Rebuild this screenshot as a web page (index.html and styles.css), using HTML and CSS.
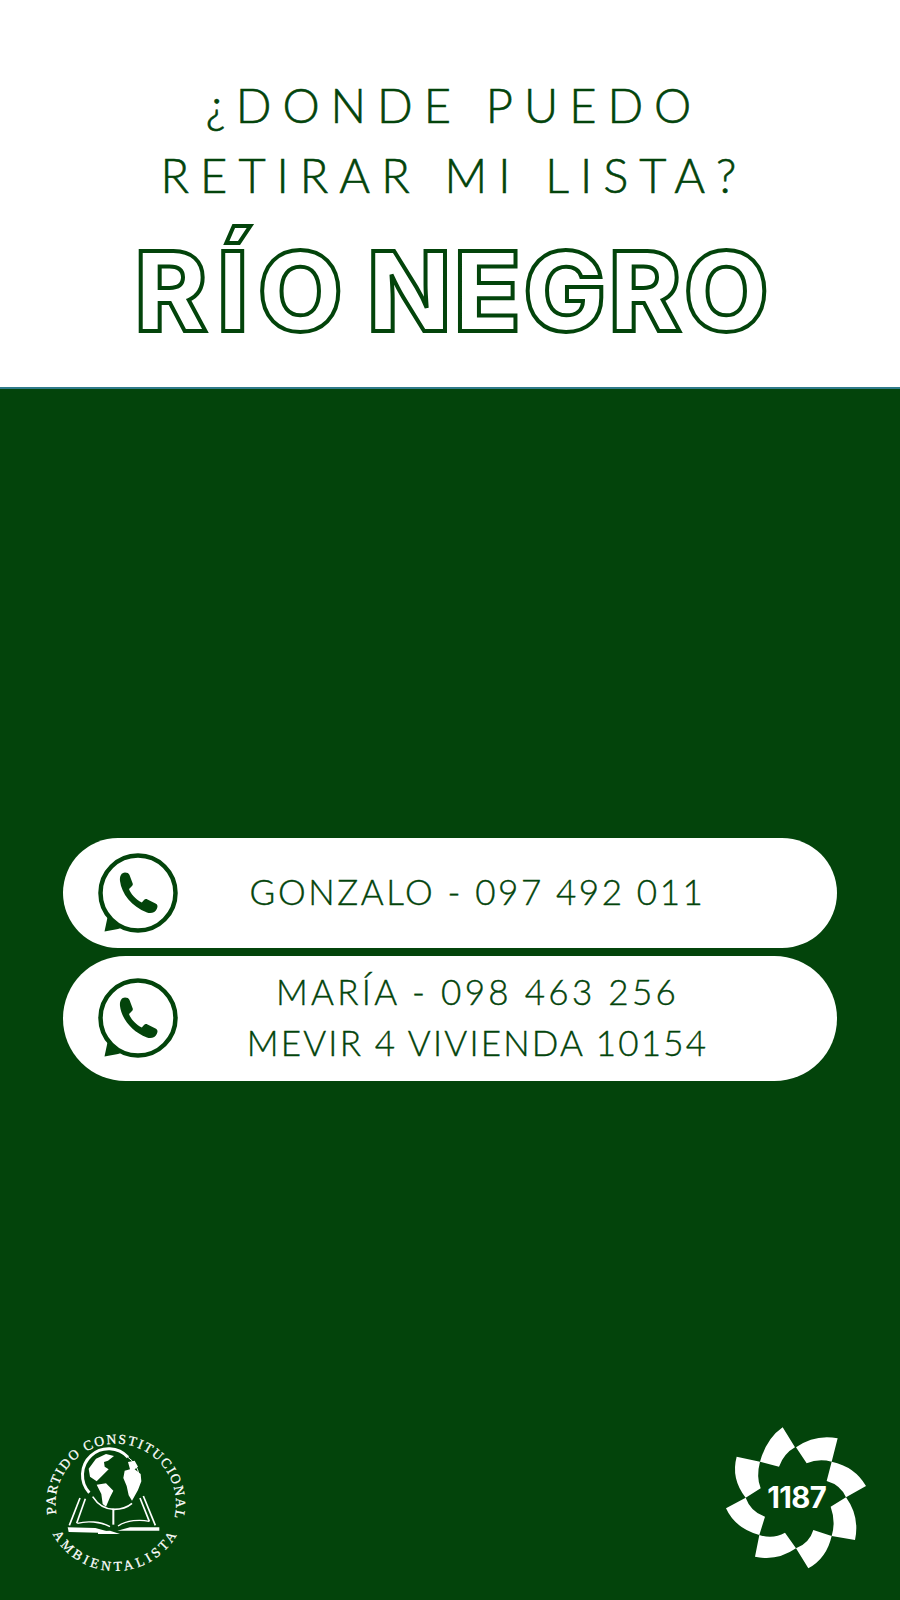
FILE: index.html
```html
<!DOCTYPE html>
<html lang="es">
<head>
<meta charset="utf-8">
<title>Río Negro</title>
<link rel="stylesheet" href="styles.css">
</head>
<body>
<svg class="defs" width="0" height="0" aria-hidden="true">
  <symbol id="wa" viewBox="-44 -44 88 88">
    <path class="wa-tail" d="M-33.5 38.5L-30 22L-14 34L-20 36Z"/>
    <circle class="wa-ring" r="37.5"/>
    <path class="wa-phone" d="M-13-20.5C-16.5-20.5-18.5-17-18-12C-16.5 0.5-6.5 13.5 9 19.5C13 21 17.5 19.5 19 15.5C20 13 19.5 11.5 17.5 10.5L9.5 6.5C8 5.7 7 6 6 7L3.8 9.5C-2.5 6.5-7.5 0.5-9 -4L-6-7C-5-8-5-9-5.5-10L-8.5-18C-9-19.7-11-20.5-13-20.5Z"/>
  </symbol>
</svg>
<header class="head">
  <p class="ask">¿DONDE PUEDO</p>
  <p class="ask">RETIRAR MI LISTA?</p>
  <h1 class="title"><span class="title-first">RÍO</span> NEGRO</h1>
</header>
<main class="panel">
  <section class="contacts">
    <div class="pill pill-one">
      <svg class="wa-icon"><use href="#wa"/></svg>
      <div class="pill-text"><p class="mid">GONZALO - 097 492 011</p></div>
    </div>
    <div class="pill pill-two">
      <svg class="wa-icon"><use href="#wa"/></svg>
      <div class="pill-text"><p class="wide">MARÍA - 098 463 256</p><p>MEVIR 4 VIVIENDA 10154</p></div>
    </div>
  </section>
  <footer class="logos">
    <svg class="logo" viewBox="0 0 510 510">
      <defs>
        <path id="arc-top" d="M79 312A181 181 0 1 1 436 312"/>
        <path id="arc-bot" d="M68 372A213 213 0 0 0 442 372"/>
      </defs>
      <text class="ring-text"><textPath href="#arc-top" textLength="640" lengthAdjust="spacing">PARTIDO CONSTITUCIONAL</textPath></text>
      <text class="ring-text"><textPath href="#arc-bot" textLength="452" lengthAdjust="spacing">AMBIENTALISTA</textPath></text>
      <g transform="translate(2 6)">
        <path class="ring-bold" d="M176 242A78 78 0 0 1 292 136"/>
        <path class="ring-thin" d="M292 136A78 78 0 0 1 308 250"/>
        <path class="ink" d="M196 140L226 126L250 132L232 146L220 150L222 164L234 172L216 190L198 208L178 194L174 170Z"/>
        <path class="ink" d="M198 218L226 214L248 236L238 256L226 284L216 276L212 246Z"/>
        <path class="ink" d="M292 150L312 146L322 164L312 172L330 186L332 208L322 234L304 266L294 250L288 222L278 198L282 176L298 172Z"/>
        <path class="line" d="M186 254C204 282 226 292 250 292C270 292 288 288 304 274"/>
      </g>
      <path class="line thick" d="M250 296V344"/>
      <path class="line" d="M150 264L118 346"/>
      <path class="line" d="M166 266L140 340"/>
      <path class="line thin" d="M142 340C170 332 212 334 240 350"/>
      <path class="line" d="M340 258L376 346"/>
      <path class="line" d="M330 264L358 334"/>
      <path class="line thin" d="M358 334C330 328 290 330 264 348"/>
      <path class="ink" d="M113 352L196 354L240 366L204 368L116 366Z"/>
      <path class="ink" d="M388 352L300 352L262 362L388 362Z"/>
      <path class="ink" d="M204 364L240 362L270 372L204 372Z"/>
    </svg>
    <svg class="logo" viewBox="0 0 510 510">
      <path class="ink" d="M218 52L255 112Q222 130 207 170L150 155Q170 85 218 52Z"/>
      <path class="ink" d="M383 85L365 155Q325 145 290 160L258 112Q315 72 383 85Z"/>
      <path class="ink" d="M468 228L408 262Q392 225 350 213L365 155Q435 170 468 228Z"/>
      <path class="ink" d="M435 390L365 378Q378 335 362 290L408 262Q450 320 435 390Z"/>
      <path class="ink" d="M295 475L258 415Q298 400 310 360L365 378Q350 445 295 475Z"/>
      <path class="ink" d="M135 440L148 375Q190 388 225 368L258 415Q200 455 135 440Z"/>
      <path class="ink" d="M48 295L107 263Q122 305 165 320L148 375Q75 355 48 295Z"/>
      <path class="ink" d="M80 140L150 155Q138 200 152 235L107 263Q62 205 80 140Z"/>
      <text class="num" x="260" y="293" text-anchor="middle">1187</text>
    </svg>
  </footer>
</main>
</body>
</html>
```
FILE: styles.css
```css
* { box-sizing: border-box; margin: 0; padding: 0; }
html, body { width: 900px; height: 1600px; overflow: hidden; background: #03440b; }
body { font-family: "Lato", sans-serif; color: #03440b; }
.defs { display: block; height: 0; }

.head {
  height: 389px;
  background: #fff;
  border-bottom: 2px solid #2f7a8a;
  padding-top: 70px;
  text-align: center;
}
.ask {
  padding-left: 8px;
  font-size: 47px;
  font-weight: 300;
  line-height: 70px;
  letter-spacing: 11px;
  -webkit-text-stroke: 0.6px #03440b;
}
.title {
  margin-top: 25px;
  padding-left: 6px;
  font-family: "Inter", sans-serif;
  font-size: 110px;
  font-weight: 800;
  line-height: 112px;
  letter-spacing: 2.5px;
  word-spacing: -12px;
  color: #fff;
  -webkit-text-stroke: 4px #03440b;
}
.title-first { letter-spacing: 9.5px; }

.panel { height: 1211px; padding-top: 449px; background: #03440b; }
.contacts { display: flex; flex-direction: column; gap: 8px; margin: 0 63px; }
.pill {
  display: flex;
  align-items: center;
  background: #fff;
  border-radius: 999px;
  padding-left: 31px;
}
.pill-one { height: 110px; }
.pill-two { height: 125px; }
.pill-two .wa-icon { margin-bottom: 2px; }
.wa-icon { width: 88px; height: 88px; flex: none; }
.wa-tail, .wa-phone { fill: #03440b; }
.wa-ring { fill: #fff; stroke: #03440b; stroke-width: 4.5; }
.pill-text {
  flex: 1;
  padding: 0 64px 3px 0;
  text-align: center;
  font-size: 35px;
  font-weight: 300;
  line-height: 51px;
  letter-spacing: 2.2px;
  -webkit-text-stroke: 0.4px #03440b;
}
.mid { letter-spacing: 2.6px; }
.wide { letter-spacing: 3.3px; }

.logos {
  display: flex;
  justify-content: space-between;
  margin-top: 329px;
  padding: 0 20px 0 30px;
}
.logo { width: 170px; height: 170px; flex: none; }
.ink { fill: #fff; }
.line { fill: none; stroke: #fff; stroke-width: 5; }
.thick { stroke-width: 6; }
.thin { stroke-width: 4; }
.ring-bold { fill: none; stroke: #fff; stroke-width: 9; }
.ring-thin { fill: none; stroke: #fff; stroke-width: 3; }
.ring-text {
  font-family: "Liberation Serif", serif;
  font-size: 41px;
  fill: #fff;
  stroke: #fff;
  stroke-width: 0.8;
}
.num {
  font-family: "Inter", sans-serif;
  font-size: 88px;
  font-weight: 700;
  letter-spacing: -2px;
  fill: #fff;
}
```
